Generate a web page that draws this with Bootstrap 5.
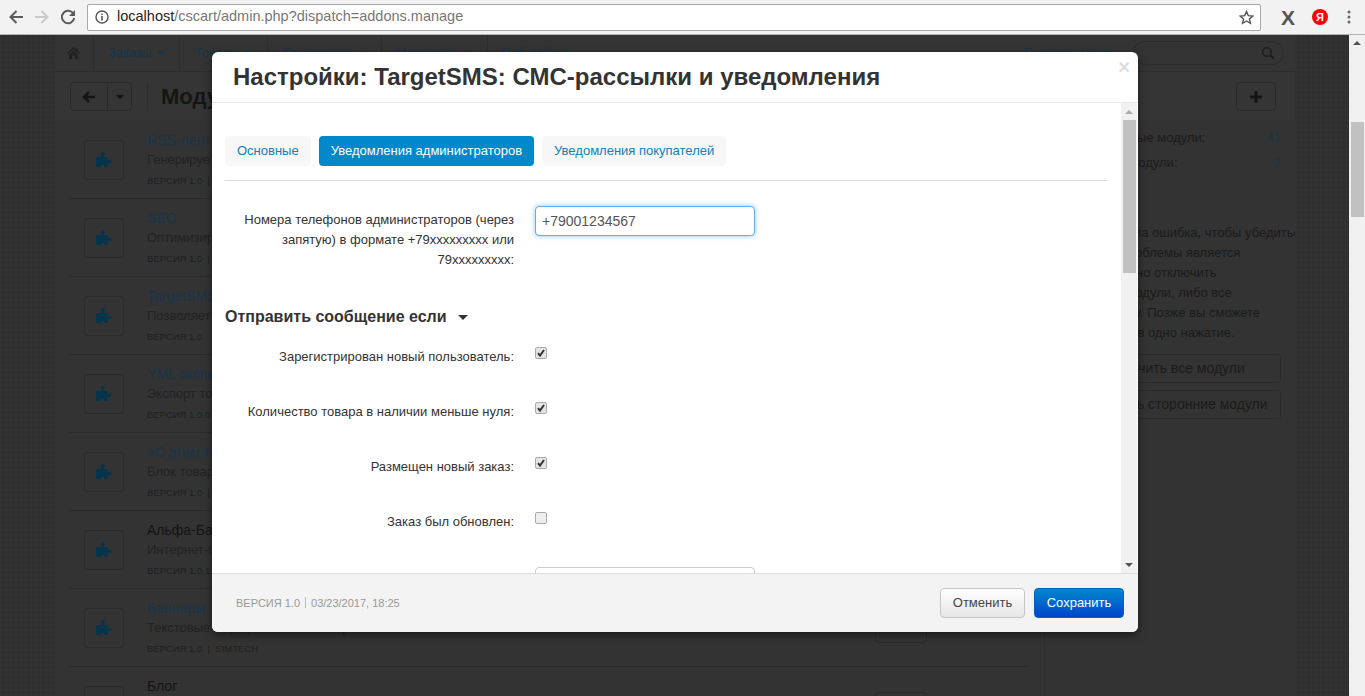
<!DOCTYPE html>
<html lang="ru">
<head>
<meta charset="utf-8">
<title>Модули</title>
<link rel="stylesheet" href="https://cdn.jsdelivr.net/npm/bootstrap@5.3.0/dist/css/bootstrap.min.css">
<style>
html,body{height:100%;overflow:hidden}
body{font-family:"Liberation Sans",Arial,sans-serif;font-size:13px;color:#333;background:#303030;display:flex;flex-direction:column}
.chrome-bar{height:35px;flex:none;background:#f2f2f2;border-bottom:1px solid #b4b4b4;padding:0 0 0 7px}
.chrome-bar svg{display:block;flex:none}
.addr{width:1174px;height:27px;margin-left:10px;margin-top:0;background:#fff;border:1px solid #a9a9a9;border-radius:2px;padding:0 6px 0 7px;font-size:14.5px}
.addr b{font-weight:400;color:#222}
.addr span.path{color:#777}
.ext-x{font-size:21px;font-weight:700;color:#555;line-height:1;margin-left:18px;width:18px;text-align:center}
.ya-badge{width:16px;height:16px;border-radius:50%;background:#f00;color:#fff;font-size:11px;font-weight:700;line-height:16px;text-align:center;margin-left:15px}
.stage{flex:1;position:relative;min-height:0;overflow:hidden}
.page-bg{background-color:#2f2f2f;background-image:repeating-linear-gradient(90deg,rgba(255,255,255,.012) 0 2px,transparent 2px 5px),repeating-linear-gradient(0deg,rgba(255,255,255,.012) 0 2px,transparent 2px 5px);min-width:0}
.page-shell{width:1240px;margin-left:55px;height:100%;background:#333;overflow:hidden}
.top-nav{height:37px;background:#343434;border-bottom:1px solid #2d2d2d;padding-left:0}
.top-nav .tn{display:flex;align-items:center;height:36px;padding:0 14px;border-left:1px solid #2d2d2d;color:#17354c;font-size:13px;white-space:nowrap}
.top-nav .tn:first-child{border-left:0;padding:0 12px 0 12px;width:38px}
.caret-d{display:inline-block;width:0;height:0;border-left:4px solid transparent;border-right:4px solid transparent;border-top:4px solid #17354c;margin-left:6px}
.quick-link{color:#17354c;margin-left:auto;margin-right:20px}
.search-pill{width:151px;height:24px;border:1px solid #2b2b2b;border-radius:12px;margin-right:11px;padding-right:8px}
.tool-bar{height:48px;background:#353535;padding:10px 19px 0 15px}
.tb-btn{border:1px solid #2a2a2a;background:#353535;height:29px;color:#151515;border-radius:4px}
.tb-back{width:38px;border-radius:4px 0 0 4px;font-size:18px;font-weight:700}
.tb-down{width:25px;margin-left:-1px;border-radius:0 4px 4px 0}
.tb-sep{width:1px;height:29px;background:#2d2d2d;margin:0 13px 0 15px}
.tb-title{font-size:22px;font-weight:700;color:#151515;line-height:29px}
.tb-plus{width:40px;font-size:22px;font-weight:700;line-height:1}
.list-col{width:990px;padding:1px 15px 0 14px;border-right:1px solid #2c2c2c;height:600px;background:#333}
.mod-row{height:78px;border-bottom:1px solid #2b2b2b;padding:19px 0 0 15px;position:static}
.mod-icon{width:40px;height:40px;flex:none;border:1px solid #2b2b2b;border-radius:3px;margin-right:23px}
.mod-text{margin-top:-9px;flex:1;min-width:0}
.mod-title{color:#17354c;font-size:14px;line-height:18px}
.mod-title.plain{color:#141414}
.mod-desc{color:#222;font-size:13px;line-height:20px;margin-top:1px}
.mod-ver{color:#1f1f1f;font-size:9.5px;line-height:12px;margin-top:5px}
.mod-act{width:52px;height:29px;border:1px solid #2a2a2a;border-radius:4px;margin:6px 102px 0 0;flex:none}
.side-col{width:250px;padding:0 14px 0 15px;color:#1b1b1b;font-size:13px}
.stat-line{display:flex;justify-content:space-between;height:25px;align-items:center}
.stat-line a{color:#17354c;text-decoration:none}
.side-par{margin-top:48px;line-height:20px;white-space:nowrap;margin-bottom:11px}
.side-btn{display:block;width:100%;height:29px;border:1px solid #2a2a2a;border-radius:3px;text-align:center;line-height:27px;color:#1b1b1b;margin-bottom:7px;white-space:nowrap;font-size:14px;padding-left:0}
.side-scroll{width:16px;background:#f1f1f1;flex:none;position:relative}
.sb-up{width:0;height:0;border-left:4px solid transparent;border-right:4px solid transparent;border-bottom:4px solid #505050;margin:6px auto 0}
.sb-thumb{width:13px;height:95px;background:#c1c1c1;margin:77px 0 0 2px}
.settings-modal{position:absolute;overflow:hidden;background:transparent;z-index:5}
.settings-dialog{width:926px;max-width:none;margin:17px 0 0 212px}
.settings-card{height:580px;border:0;border-radius:6px;background:#fff;overflow:hidden;box-shadow:0 3px 9px rgba(0,0,0,.5)}
.settings-card .modal-header{height:51px;flex:none;padding:0 8px 0 21px;border-bottom:1px solid #e8e8e8;border-radius:0;align-items:flex-start}
.settings-card h1{font-family:"Liberation Sans",Arial,sans-serif;font-size:24px;font-weight:700;color:#333;line-height:50px;margin:0}
.x-close{font-size:20px;font-weight:700;color:#ddd;line-height:1;margin-top:5px;margin-left:auto}
.settings-card .modal-body{padding:0;min-height:0;overflow:hidden}
.scroll-pane{flex:1;min-width:0;padding:33px 14px 0 13px;overflow:hidden}
.settings-tabs{gap:8px;padding-bottom:14px;border-bottom:1px solid #ddd;margin-bottom:25px}
.settings-tabs .nav-link{height:30px;padding:0 12px;line-height:29px;background:#f7f7f7;color:#0f80c0;font-size:13px;border-radius:4px}
.settings-tabs .nav-link.active{background:#0088cc;color:#fff}
.field-row{display:flex;align-items:flex-start}
.field-label{width:289px;flex:none;text-align:right;font-size:13px;line-height:20px;color:#333;padding-top:4px;margin:0}
.phone-input.form-control{width:220px;height:30px;margin-left:21px;padding:0 6px;font-size:14px;color:#555;border:1px solid #66afe9;border-radius:4px;box-shadow:0 0 5px rgba(102,175,233,.75);font-family:"Liberation Sans",Arial,sans-serif}
.plain-input{width:220px;height:30px;margin-left:21px;border:1px solid #ccc;border-radius:4px;flex:none}
.group-head{font-size:16px;font-weight:700;color:#333;line-height:20px;margin:37px 0 20px}
.group-caret{display:inline-block;width:0;height:0;border-left:5px solid transparent;border-right:5px solid transparent;border-top:5px solid #333;margin-left:11px;vertical-align:2px}
.check-row{height:55px}
.check-row .field-label{padding-top:0;margin-top:0}
.check-box.form-check-input{width:12px;height:12px;margin:0 0 0 21px;flex:none;border:1px solid #aaa;border-radius:2px;background-color:#ededed;box-shadow:none}
.check-box.form-check-input:checked{background-color:#e4e4e4;border-color:#aaa;background-size:10px;background-image:url("data:image/svg+xml,%3csvg xmlns='http://www.w3.org/2000/svg' viewBox='0 0 10 10'%3e%3cpath fill='none' stroke='%23333' stroke-width='2' d='M2 5.2 4 7.6 8 2'/%3e%3c/svg%3e")}
.pane-scroll{width:16px;flex:none;background:#f1f1f1;margin-right:1px;display:flex;flex-direction:column;position:relative}
.pane-up{width:0;height:0;border-left:4px solid transparent;border-right:4px solid transparent;border-bottom:4px solid #aaa;margin:7px auto 0}
.pane-thumb{width:13px;height:153px;background:#c1c1c1;margin:6px 0 0 2px}
.pane-down{width:0;height:0;border-left:4px solid transparent;border-right:4px solid transparent;border-top:4px solid #555;margin:auto auto 6px}
.settings-card .modal-footer{height:59px;flex:none;background:#f3f3f3;border-top:1px solid #ddd;padding:0 14px 0 24px;border-radius:0;justify-content:flex-start;gap:0;align-items:center}
.foot-meta{color:#999;font-size:11px;margin:0 auto 0 0;line-height:14px}
.foot-meta i{display:inline-block;width:1px;height:11px;background:#bbb;margin:0 5px;vertical-align:-1px}
.foot-btn{height:30px;font-size:13px;padding:0;border-radius:4px;margin:0}
.foot-cancel{width:85px;color:#444;border:1px solid #c5c5c5;background:linear-gradient(#fff,#e6e6e6);margin-right:9px}
.foot-save{width:90px;color:#fff;border:1px solid #0560c0;background:linear-gradient(#0088cc,#0044cc)}
</style>
</head>
<body>
<div class="chrome-bar d-flex align-items-center">
  <svg width="18" height="18" viewBox="0 0 18 18"><path d="M16 9H4M9.5 3 3.5 9l6 6" fill="none" stroke="#5a5a5a" stroke-width="2"/></svg>
  <svg class="ms-2" style="margin-left:10px" width="18" height="18" viewBox="0 0 18 18"><path d="M2 9h12M8.5 3l6 6-6 6" fill="none" stroke="#c9c9c9" stroke-width="2"/></svg>
  <svg style="margin-left:8px" width="18" height="18" viewBox="0 0 18 18"><path d="M14.5 6A6.2 6.2 0 1 0 15.2 10" fill="none" stroke="#5a5a5a" stroke-width="2"/><path d="M16 2v6h-6z" fill="#5a5a5a"/></svg>
  <div class="addr d-flex align-items-center">
    <svg width="14" height="14" viewBox="0 0 14 14" class="me-2"><circle cx="7" cy="7" r="6" fill="none" stroke="#555" stroke-width="1.4"/><path d="M7 6v4.5M7 3.4v1.6" stroke="#555" stroke-width="1.6"/></svg>
    <span class="ms-0"><b>localhost</b><span class="path">/cscart/admin.php?dispatch=addons.manage</span></span>
    <svg class="ms-auto" width="15" height="15" viewBox="0 0 16 16"><path d="M8 1.6l1.9 4.4 4.8.4-3.6 3.1 1.1 4.7L8 11.7l-4.2 2.5 1.1-4.7L1.3 6.4l4.8-.4z" fill="none" stroke="#555" stroke-width="1.5"/></svg>
  </div>
  <span class="ext-x">X</span>
  <span class="ya-badge">Я</span>
  <svg style="margin-left:19px" width="4" height="14" viewBox="0 0 4 14"><circle cx="2" cy="2" r="1.5" fill="#666"/><circle cx="2" cy="7" r="1.5" fill="#666"/><circle cx="2" cy="12" r="1.5" fill="#666"/></svg>
</div>
<div class="stage d-flex">
  <div class="page-bg flex-grow-1">
    <div class="page-shell">
      <div class="top-nav d-flex align-items-center">
        <span class="tn"><svg width="13" height="12" viewBox="0 0 13 12"><path d="M6.5 0 0 6l1 1 5.5-5 5.500 5 1-1-2-2V1H9.500v1.500zM2 7.500V12h3V8.500h3V12h3V7.500L6.500 3.300z" fill="#222"/></svg></span>
        <span class="tn">Заказы<i class="caret-d"></i></span>
        <span class="tn">Товары<i class="caret-d"></i></span>
        <span class="tn">Покупатели<i class="caret-d"></i></span>
        <span class="tn">Маркетинг<i class="caret-d"></i></span>
        <span class="tn">Веб-сайт<i class="caret-d"></i></span>
        <span class="quick-link">Быстрое меню</span>
        <div class="search-pill d-flex align-items-center justify-content-end"><svg width="14" height="14" viewBox="0 0 14 14"><circle cx="6" cy="6" r="4.300" fill="none" stroke="#1d1d1d" stroke-width="1.500"/><path d="M9 9l4 4" stroke="#1d1d1d" stroke-width="2"/></svg></div>
      </div>
      <div class="tool-bar d-flex align-items-start">
        <button class="tb-btn tb-back d-flex align-items-center justify-content-center p-0" type="button" aria-label="Назад"><svg width="14" height="12" viewBox="0 0 14 12"><path d="M13 6H4M7 1 2 6l5 5" fill="none" stroke="#151515" stroke-width="2.600"/></svg></button>
        <button class="tb-btn tb-down d-flex align-items-center justify-content-center p-0" type="button" aria-label="Меню"><i class="caret-d m-0" style="border-top-color:#151515"></i></button>
        <span class="tb-sep"></span>
        <span class="tb-title">Модули</span>
        <button class="tb-btn tb-plus ms-auto d-flex align-items-center justify-content-center p-0" type="button" aria-label="Добавить"><svg width="12" height="12" viewBox="0 0 12 12"><path d="M6 0v12M0 6h12" stroke="#151515" stroke-width="3"/></svg></button>
      </div>
      <div class="d-flex">
        <div class="list-col">
          <div class="mod-row d-flex"><div class="mod-icon d-flex align-items-center justify-content-center"><svg width="20" height="20" viewBox="0 0 20 20"><path d="M2 7h5.200V5.400a2 2 0 1 1 2.800 0V7h3.600v3.200h1a1.800 1.800 0 0 1 3 1.300 1.800 1.800 0 0 1-3 1.300h-1V17H10v-1.500a1.800 1.800 0 0 0-3 0V17H2z" fill="#06344a"/></svg></div><div class="mod-text"><div class="mod-title">RSS-лента</div><div class="mod-desc">Генерирует RSS-ленту для новых товаров вашего магазина</div><div class="mod-ver">ВЕРСИЯ 1.0 &nbsp;|&nbsp; SIMTECH</div></div><div class="mod-act"></div></div>
          <div class="mod-row d-flex"><div class="mod-icon d-flex align-items-center justify-content-center"><svg width="20" height="20" viewBox="0 0 20 20"><path d="M2 7h5.200V5.400a2 2 0 1 1 2.800 0V7h3.600v3.200h1a1.800 1.800 0 0 1 3 1.300 1.800 1.800 0 0 1-3 1.300h-1V17H10v-1.500a1.800 1.800 0 0 0-3 0V17H2z" fill="#06344a"/></svg></div><div class="mod-text"><div class="mod-title">SEO</div><div class="mod-desc">Оптимизирует магазин для поисковых систем</div><div class="mod-ver">ВЕРСИЯ 1.0 &nbsp;|&nbsp; SIMTECH</div></div><div class="mod-act"></div></div>
          <div class="mod-row d-flex"><div class="mod-icon d-flex align-items-center justify-content-center"><svg width="20" height="20" viewBox="0 0 20 20"><path d="M2 7h5.200V5.400a2 2 0 1 1 2.800 0V7h3.600v3.200h1a1.800 1.800 0 0 1 3 1.300 1.800 1.800 0 0 1-3 1.300h-1V17H10v-1.500a1.800 1.800 0 0 0-3 0V17H2z" fill="#06344a"/></svg></div><div class="mod-text"><div class="mod-title">TargetSMS: СМС-рассылки</div><div class="mod-desc">Позволяет отправлять СМС-уведомления</div><div class="mod-ver">ВЕРСИЯ 1.0</div></div><div class="mod-act"></div></div>
          <div class="mod-row d-flex"><div class="mod-icon d-flex align-items-center justify-content-center"><svg width="20" height="20" viewBox="0 0 20 20"><path d="M2 7h5.200V5.400a2 2 0 1 1 2.800 0V7h3.600v3.200h1a1.800 1.800 0 0 1 3 1.300 1.800 1.800 0 0 1-3 1.300h-1V17H10v-1.500a1.800 1.800 0 0 0-3 0V17H2z" fill="#06344a"/></svg></div><div class="mod-text"><div class="mod-title">YML экспорт</div><div class="mod-desc">Экспорт товаров в формате YML</div><div class="mod-ver">ВЕРСИЯ 1.0.0</div></div><div class="mod-act"></div></div>
          <div class="mod-row d-flex"><div class="mod-icon d-flex align-items-center justify-content-center"><svg width="20" height="20" viewBox="0 0 20 20"><path d="M2 7h5.200V5.400a2 2 0 1 1 2.800 0V7h3.600v3.200h1a1.800 1.800 0 0 1 3 1.300 1.800 1.800 0 0 1-3 1.300h-1V17H10v-1.500a1.800 1.800 0 0 0-3 0V17H2z" fill="#06344a"/></svg></div><div class="mod-text"><div class="mod-title">«С этим товаром покупают»</div><div class="mod-desc">Блок товаров, которые покупают вместе</div><div class="mod-ver">ВЕРСИЯ 1.0 &nbsp;|&nbsp; SIMTECH</div></div><div class="mod-act"></div></div>
          <div class="mod-row d-flex"><div class="mod-icon d-flex align-items-center justify-content-center"><svg width="20" height="20" viewBox="0 0 20 20"><path d="M2 7h5.200V5.400a2 2 0 1 1 2.800 0V7h3.600v3.200h1a1.800 1.800 0 0 1 3 1.300 1.800 1.800 0 0 1-3 1.300h-1V17H10v-1.500a1.800 1.800 0 0 0-3 0V17H2z" fill="#06344a"/></svg></div><div class="mod-text"><div class="mod-title plain">Альфа-Банк</div><div class="mod-desc">Интернет-банкинг</div><div class="mod-ver">ВЕРСИЯ 1.0.1</div></div><div class="mod-act"></div></div>
          <div class="mod-row d-flex"><div class="mod-icon d-flex align-items-center justify-content-center"><svg width="20" height="20" viewBox="0 0 20 20"><path d="M2 7h5.200V5.400a2 2 0 1 1 2.800 0V7h3.600v3.200h1a1.800 1.800 0 0 1 3 1.300 1.800 1.800 0 0 1-3 1.300h-1V17H10v-1.500a1.800 1.800 0 0 0-3 0V17H2z" fill="#06344a"/></svg></div><div class="mod-text"><div class="mod-title">Баннеры</div><div class="mod-desc">Текстовые и графические баннеры</div><div class="mod-ver">ВЕРСИЯ 1.0 &nbsp;|&nbsp; SIMTECH</div></div><div class="mod-act"></div></div>
          <div class="mod-row d-flex"><div class="mod-icon d-flex align-items-center justify-content-center"><svg width="20" height="20" viewBox="0 0 20 20"><path d="M2 7h5.200V5.400a2 2 0 1 1 2.800 0V7h3.600v3.200h1a1.800 1.800 0 0 1 3 1.300 1.800 1.800 0 0 1-3 1.300h-1V17H10v-1.500a1.800 1.800 0 0 0-3 0V17H2z" fill="#06344a"/></svg></div><div class="mod-text"><div class="mod-title plain">Блог</div><div class="mod-desc">Записи блога</div><div class="mod-ver">ВЕРСИЯ 1.0</div></div><div class="mod-act"></div></div>
        </div>
        <div class="side-col">
          <div style="height:5px"></div>
          <div class="stat-line"><span>Установленные модули:</span><a href="#">41</a></div>
          <div class="stat-line"><span>Сторонние модули:</span><a href="#">2</a></div>
          <div class="side-par">Если возникла ошибка, чтобы убедиться, что<br>причиной проблемы является<br>модуль, можно отключить<br>сторонние модули, либо все<br>модули сразу. Позже вы сможете<br>включить их в одно нажатие.</div>
          <div class="side-btn">Отключить все модули</div>
          <div class="side-btn">Отключить сторонние модули</div>
        </div>
      </div>
    </div>
  </div>
  <div class="side-scroll"><div class="sb-up"></div><div class="sb-thumb"></div></div>
  <div class="modal d-block settings-modal">
    <div class="modal-dialog settings-dialog">
      <div class="modal-content settings-card">
        <div class="modal-header">
          <h1 class="modal-title">Настройки: TargetSMS: СМС-рассылки и уведомления</h1>
          <span class="x-close">×</span>
        </div>
        <div class="modal-body d-flex">
          <div class="scroll-pane">
            <ul class="nav nav-pills settings-tabs">
              <li class="nav-item"><a class="nav-link" href="#">Основные</a></li>
              <li class="nav-item"><a class="nav-link active" href="#">Уведомления администраторов</a></li>
              <li class="nav-item"><a class="nav-link" href="#">Уведомления покупателей</a></li>
            </ul>
            <div class="field-row">
              <label class="field-label">Номера телефонов администраторов (через запятую) в формате +79xxxxxxxxx или 79xxxxxxxxx:</label>
              <input class="form-control phone-input" type="text" value="+79001234567">
            </div>
            <div class="group-head">Отправить сообщение если<i class="group-caret"></i></div>
            <div class="field-row check-row"><label class="field-label">Зарегистрирован новый пользователь:</label><input class="form-check-input check-box" type="checkbox" checked></div>
            <div class="field-row check-row"><label class="field-label">Количество товара в наличии меньше нуля:</label><input class="form-check-input check-box" type="checkbox" checked></div>
            <div class="field-row check-row"><label class="field-label">Размещен новый заказ:</label><input class="form-check-input check-box" type="checkbox" checked></div>
            <div class="field-row check-row"><label class="field-label">Заказ был обновлен:</label><input class="form-check-input check-box" type="checkbox"></div>
            <div class="field-row"><label class="field-label">Статусы заказа для уведомления:</label><div class="plain-input"></div></div>
          </div>
          <div class="pane-scroll"><div class="pane-up"></div><div class="pane-thumb"></div><div class="pane-down"></div></div>
        </div>
        <div class="modal-footer">
          <p class="foot-meta">ВЕРСИЯ 1.0<i></i>03/23/2017, 18:25</p>
          <button class="btn foot-btn foot-cancel" type="button">Отменить</button>
          <button class="btn foot-btn foot-save" type="button">Сохранить</button>
        </div>
      </div>
    </div>
  </div>
</div>
<script src="https://cdn.jsdelivr.net/npm/bootstrap@5.3.0/dist/js/bootstrap.bundle.min.js"></script>
</body>
</html>
